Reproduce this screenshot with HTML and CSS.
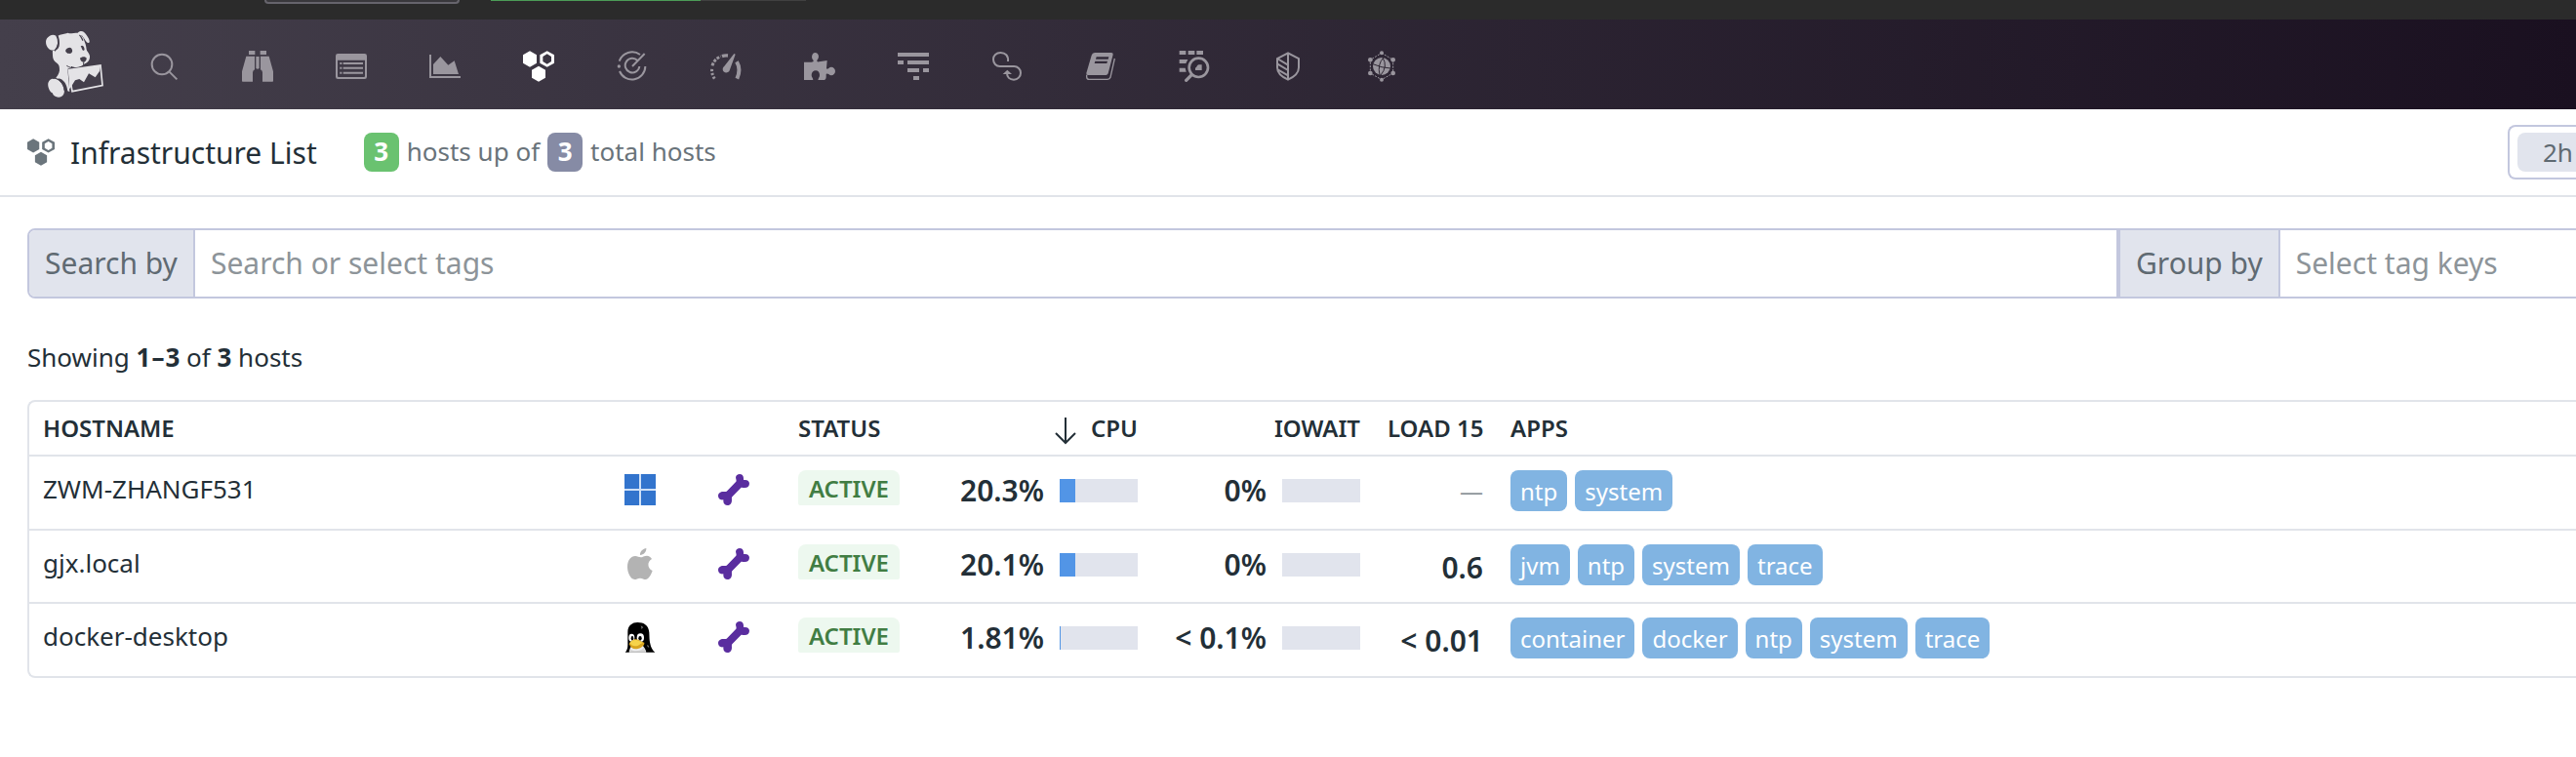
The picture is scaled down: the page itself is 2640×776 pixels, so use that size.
FILE: index.html
```html
<!DOCTYPE html>
<html lang="en">
<head>
<meta charset="utf-8">
<title>Infrastructure List</title>
<link rel="stylesheet" href="styles.css">
</head>
<body>
<svg class="defs" width="0" height="0" aria-hidden="true">
  <symbol id="bone" viewBox="0 0 96 96">
    <path d="M54 11C54 4 60 0 66 0c7 0 12 5 12 12v5c1 1 2 1 3 1 9-1 15 4 15 11 0 8-6 13-14 13-5 0-8-1-11-1L43 70c-2 3-1 6-1 10 0 10-6 16-13 16-8 0-13-6-13-13v-4C6 81 0 75 0 67c0-8 7-13 15-13 4 0 7 1 11-1l29-30c2-3 0-7-1-12z" fill="#5a2d9f"/>
  </symbol>
  <symbol id="hexes" viewBox="168 157 96 96">
    <path d="M189 158l21 12v25l-21 12-21-12v-25zM216 204l21 12v24l-21 12-21-12v-24z"/>
    <path fill-rule="evenodd" d="M242 158l22 12v25l-22 12-22-12v-25zM242 167l-13 8v15l13 8 13-8v-15z"/>
  </symbol>
</svg>

<div class="browser-bar">
  <span class="browser-tab"></span>
  <span class="progress"><span class="progress-done"></span></span>
</div>

<nav class="nav" aria-label="Main">
  <a class="logo" href="#" aria-label="Home">
    <svg viewBox="0 0 216 234" width="72" height="78" aria-hidden="true">
      <path fill="#e4e3e6" d="M58 29c8-4 17-5 26-7l5-2 4 2c10-1 18-2 26-2 3-4 8-6 13-5 8 2 13 10 18 18 4 6 6 12 5 16-2 3-6 2-9-1-4-4-7-10-10-14-3-5-5-7-7-7 4 5 8 8 9 14 4 10 7 18 8 30 1 6 9 11 10 20 1 12-5 20-15 24-6 4-14 12-24 12l-21 1-8 4 6 69-6-2c-2-12-4-25-19-36-5-3-12-3-20 1 5-9 13-17 14-28 0-11-1-18-7-22-10-6-14-15-14-24 0-8-1-12 0-15 10 0 18-5 20-14 2-12 0-23-3-32z"/>
      <path fill="#e4e3e6" d="M21 47c0-8 5-14 12-18 9-5 20-3 23 5 4 11 2 26-5 36-4 6-15 4-21-1-6-6-9-13-9-22z"/>
      <path fill="none" stroke="#443f4b" stroke-width="4" d="M54 29c8 13 8 33-6 47M124 27c5 2 7 10 11 17"/>
      <path fill="#e4e3e6" d="M28 174c3-10 12-14 22-13 13 3 25 18 27 33 3 12-4 24-17 24-9 0-16-4-19-13-9-4-15-20-13-31z"/>
      <path fill="none" stroke="#443f4b" stroke-width="3" d="M42 160c16-4 36 17 36 37"/>
      <path fill="#443f4b" d="M82 73c3-7 14-11 18-5 5 7 2 15-6 16-8 0-14-5-12-11zM128 61c5-4 10 0 11 6 2 6 0 9-4 7-3-1-3-7-7-13zM126 98c6-6 18-6 20 0 1 6-6 13-10 12-5-1-9-6-10-12z"/>
      <path fill="none" stroke="#443f4b" stroke-width="3" d="M137 110v8c-8 12-25 12-38 6M85 121c10 7 17 7 29 7"/>
      <path fill="#443f4b" d="M89 130l104-15 8 70-102 19z"/>
      <path fill="none" stroke="#e4e3e6" stroke-width="5" d="M91 134l98-14 6 62-93 18z"/>
      <path fill="#e4e3e6" d="M91 134l98-14-3 18-13 19-20-12-15 27-14-10-13 4-13 21-5 6z"/>
    </svg>
  </a>
  <a class="nav-link" href="#" aria-label="Search"><svg viewBox="456 156 96 96"><g fill="none" stroke="currentColor" stroke-width="6"><circle cx="498" cy="198" r="31"/><path d="M520 220l24 24"/></g></svg></a>
  <a class="nav-link" href="#" aria-label="Watchdog"><svg viewBox="744 156 96 96" fill="currentColor"><path d="M765 156h19v12h-19zM800 156h19v12h-19zM787 174h10v36q-5 4-10 0zM757 173h26v41q-6 3-6 9v28h-31q-2 0-2-3v-28zM827 173h-26v41q6 3 6 9v28h31q2 0 2-3v-28z"/></svg></a>
  <a class="nav-link" href="#" aria-label="Events"><svg viewBox="1032 156 96 96"><path fill="currentColor" fill-rule="evenodd" d="M1039 165h82q7 0 7 7v64q0 7-7 7h-82q-7 0-7-7v-64q0-7 7-7zM1038 185v49q0 3 3 3h78q3 0 3-3v-49z"/><path fill="none" stroke="currentColor" stroke-width="6" d="M1045 195h6m4 0h61M1045 209h6m4 0h61M1045 224h6m4 0h61"/></svg></a>
  <a class="nav-link" href="#" aria-label="Dashboards"><svg viewBox="1320 156 96 96" fill="currentColor"><path d="M1320 168h6v66h90v6h-96zM1332 228v-30l22-24 24 26 19-13 13 41z"/></svg></a>
  <a class="nav-link active" href="#" aria-label="Infrastructure"><svg fill="currentColor"><use href="#hexes"/></svg></a>
  <a class="nav-link" href="#" aria-label="Monitors"><svg viewBox="456 156 96 96"><g fill="none" stroke="currentColor" stroke-width="6"><path d="M464 188a42 42 0 0 1 64-20M544 204a41 41 0 0 1-79 15M520 186a22 22 0 1 0 6 18M504 204l38-39"/></g><circle cx="463" cy="204" r="5" fill="currentColor"/></svg></a>
  <a class="nav-link" href="#" aria-label="Metrics"><svg viewBox="744 156 96 96"><path fill="none" stroke="currentColor" stroke-width="9" stroke-dasharray="7 5" d="M757 242q-10-15-8-32"/><path fill="none" stroke="currentColor" stroke-width="9" stroke-dasharray="9 4" d="M750 202q6-20 26-29"/><path fill="none" stroke="currentColor" stroke-width="10" d="M780 173q8-3 18-2"/><path fill="none" stroke="currentColor" stroke-width="12" d="M825 190q14 23 1 52"/><path fill="currentColor" d="M821 167l-18 50c-3 9-21 9-21-4 0-5 4-8 7-12l28-36z"/></svg></a>
  <a class="nav-link" href="#" aria-label="Integrations"><svg viewBox="1032 156 96 96" fill="currentColor"><path d="M1032 191h22q8 0 7-5c-9-9-4-24 5-24 11 0 15 15 6 23q-2 6 6 5l25-4-2 24q1 5 7 0c7-8 20-2 20 9s-13 17-20 9q-8-3-8 1v7q0 10-9 10h-16c1-6 5-8 5-15 0-8-5-14-12-14s-13 6-13 14c0 7 5 9 5 15h-28z"/></svg></a>
  <a class="nav-link" href="#" aria-label="APM"><svg viewBox="1320 156 96 96" fill="currentColor"><path d="M1320 162h96v12h-96zM1320 186h18v12h-18zM1350 186h66v12h-66zM1350 210h36v12h-36zM1398 210h18v12h-18zM1368 234h18v12h-18z"/></svg></a>
  <a class="nav-link" href="#" aria-label="CI"><svg viewBox="228 156 96 96"><path fill="none" stroke="currentColor" stroke-width="6" d="M279 189c2-18-8-27-23-27-13 0-22 9-22 20 0 13 9 22 20 22h44c11 0 20 9 20 20 0 12-9 21-21 21-13 0-21-8-21-20"/><path fill="currentColor" d="M263 228l14-13 14 13z"/></svg></a>
  <a class="nav-link" href="#" aria-label="Notebooks"><svg viewBox="516 156 96 96"><path fill="currentColor" fill-rule="evenodd" d="M546 162h51q6 0 5 6l-15 58q-2 5-7 5h-55q-6 0-5-6l16-55q2-8 10-8zM551 175l-2 7h38l2-7zM547 188l-2 7h38l2-7z"/><path fill="none" stroke="currentColor" stroke-width="4" d="M521 230v6q0 8 8 8h56q7 0 9-6l13-58"/></svg></a>
  <a class="nav-link" href="#" aria-label="Logs"><svg viewBox="804 156 96 96"><path fill="currentColor" d="M806 156h20v12h-20zM833 156h20v12h-20zM859 156h20v12h-20zM806 183h26l-6 12h-20zM806 209h18l3 12h-21z"/><circle cx="865" cy="208" r="29" fill="none" stroke="currentColor" stroke-width="8"/><path d="M844 230l-17 17" fill="none" stroke="currentColor" stroke-width="10" stroke-linecap="round"/><path fill="currentColor" d="M855 216v-7c5-1 5-10 11-10h9v17z"/></svg></a>
  <a class="nav-link" href="#" aria-label="Security"><svg viewBox="1092 156 96 96"><path fill="none" stroke="currentColor" stroke-width="6" d="M1140 163l-33 17v28c0 17 17 30 33 37 16-7 33-20 33-37v-28zM1140 163v82M1107 180l33 20M1107 196l33 20M1110 215l30 17"/></svg></a>
  <a class="nav-link" href="#" aria-label="Synthetics"><svg viewBox="1380 156 96 96"><g fill="currentColor"><circle cx="1428" cy="204" r="27"/><circle cx="1428" cy="163" r="6"/><circle cx="1428" cy="245" r="6"/><circle cx="1393" cy="184" r="7"/><circle cx="1463" cy="184" r="7"/><circle cx="1393" cy="225" r="7"/><circle cx="1463" cy="225" r="7"/></g><path fill="none" stroke="currentColor" stroke-width="3" stroke-dasharray="6 4" d="M1428 163l35 21v41l-35 20-35-20v-41z"/><path class="globe-lines" d="M1401 197q27 12 54 13M1434 177q-20 20-12 54M1431 177q17 27-6 54"/></svg></a>
</nav>

<header class="header">
  <svg class="title-icon" width="28" height="28" aria-hidden="true"><use href="#hexes"/></svg>
  <h1 class="title">Infrastructure List</h1>
  <p class="summary"><span class="count up">3</span> hosts up of <span class="count total">3</span> total hosts</p>
  <div class="time-picker"><button class="time-button" type="button">2h</button></div>
</header>

<main class="main">
  <form class="filters">
    <div class="field search">
      <label class="field-label" for="search">Search by</label>
      <input class="field-input" id="search" type="text" placeholder="Search or select tags">
    </div>
    <div class="field group">
      <label class="field-label" for="group">Group by</label>
      <input class="field-input" id="group" type="text" placeholder="Select tag keys">
    </div>
  </form>

  <p class="showing">Showing <b>1<span class="dash">–</span>3</b> of <b>3</b> hosts</p>

  <div class="panel">
    <table class="hosts">
      <colgroup><col class="c-name"><col class="c-os"><col class="c-agent"><col class="c-status"><col class="c-cpu"><col class="c-io"><col class="c-load"><col></colgroup>
      <thead>
        <tr>
          <th scope="col">HOSTNAME</th><th></th><th></th><th scope="col">STATUS</th>
          <th scope="col" class="num"><svg class="sort" width="24" height="28" viewBox="0 0 24 28" aria-hidden="true"><path d="M12 0v26M2 16l10 10 10-10"/></svg>CPU</th>
          <th scope="col" class="num">IOWAIT</th><th scope="col" class="num">LOAD 15</th><th scope="col">APPS</th>
        </tr>
      </thead>
      <tbody>
        <tr>
          <td>ZWM-ZHANGF531</td>
          <td><svg class="icon" viewBox="0 0 32 32" role="img" aria-label="Windows"><path fill="#cfe0f7" d="M0 0h32v32H0z"/><path fill="#3274cd" d="M0 0h15v15H0zM17 0h15v15H17zM0 17h15v15H0zM17 17h15v15H17z"/></svg></td>
          <td><svg class="icon" role="img" aria-label="Agent"><use href="#bone"/></svg></td>
          <td><span class="status">ACTIVE</span></td>
          <td><div class="metric">20.3%<span class="bar"><span class="fill" style="width:20.3%"></span></span></div></td>
          <td><div class="metric">0%<span class="bar"></span></div></td>
          <td class="load none">—</td>
          <td><div class="tags"><span class="tag">ntp</span><span class="tag">system</span></div></td>
        </tr>
        <tr>
          <td>gjx.local</td>
          <td><svg class="icon" viewBox="0 0 96 96" role="img" aria-label="macOS"><path fill="#b3b3b3" d="M67 0c1 10-8 21-19 21C47 10 57 1 67 0zM84 33c-15 8-14 29 2 36-4 12-11 26-21 27-6 0-9-4-17-4s-11 4-17 4C18 96 9 74 9 58c0-22 11-34 24-34 7 0 12 4 17 4s11-5 19-5c6 0 12 4 15 10z"/></svg></td>
          <td><svg class="icon" role="img" aria-label="Agent"><use href="#bone"/></svg></td>
          <td><span class="status">ACTIVE</span></td>
          <td><div class="metric">20.1%<span class="bar"><span class="fill" style="width:20.1%"></span></span></div></td>
          <td><div class="metric">0%<span class="bar"></span></div></td>
          <td class="load">0.6</td>
          <td><div class="tags"><span class="tag">jvm</span><span class="tag">ntp</span><span class="tag">system</span><span class="tag">trace</span></div></td>
        </tr>
        <tr>
          <td>docker-desktop</td>
          <td><svg class="icon" viewBox="0 0 96 96" role="img" aria-label="Linux"><path d="M2 95c6-6 8-14 8-24V32C10 13 24 3 40 3c20 0 34 9 36 31 1 15 0 24 3 34 2 11 7 20 15 27z"/><path fill="#eee" d="M14 95c2-12 5-17 11-22l28-2c6 6 12 13 14 24z"/><path fill="#bbb" d="M18 86c8 6 30 8 42-6l5 15H16z" opacity=".5"/><g fill="#fff"><ellipse cx="22" cy="50" rx="9" ry="12"/><ellipse cx="49" cy="50" rx="11" ry="13"/></g><ellipse cx="24" cy="52" rx="4" ry="7"/><ellipse cx="48" cy="52" rx="5" ry="7"/><path fill="#d9a520" d="M14 70c4-8 14-16 22-15 10 1 15 9 25 10 2 10-14 20-27 20-9 0-16-6-20-15z"/><path fill="#f6d34a" d="M16 66c5-6 12-10 20-9 9 1 14 7 22 9-10 2-14 10-25 10-8 0-13-4-17-10z"/><path fill="#777" d="M50 13l8 5-6 6v-5zM69 72l5 2 2 7-5-3z"/></svg></td>
          <td><svg class="icon" role="img" aria-label="Agent"><use href="#bone"/></svg></td>
          <td><span class="status">ACTIVE</span></td>
          <td><div class="metric">1.81%<span class="bar"><span class="fill" style="width:1.81%"></span></span></div></td>
          <td><div class="metric">&lt; 0.1%<span class="bar"></span></div></td>
          <td class="load">&lt; 0.01</td>
          <td><div class="tags"><span class="tag">container</span><span class="tag">docker</span><span class="tag">ntp</span><span class="tag">system</span><span class="tag">trace</span></div></td>
        </tr>
      </tbody>
    </table>
  </div>
</main>
</body>
</html>
```
FILE: styles.css
```css
* { box-sizing: border-box; }

body {
  margin: 0;
  background: #fff;
  color: #232f37;
  font-family: "Noto Sans", sans-serif;
  font-size: 26px;
  line-height: 38px;
  overflow-x: hidden;
}

h1, p { margin: 0; }
button, input { font: inherit; }
svg { display: block; }
.defs { position: absolute; }

/* Strip of browser chrome */
.browser-bar {
  display: flex;
  align-items: flex-start;
  gap: 32px;
  height: 20px;
  padding-left: 271px;
  background: #2b2b2b;
}
.browser-tab {
  width: 200px;
  height: 4px;
  border: 2px solid #66646c;
  border-top: 0;
  border-radius: 0 0 8px 8px;
  background: #39383c;
}
.progress { width: 323px; height: 1px; background: #404040; }
.progress-done { display: block; width: 215px; height: 1px; background: #4c9c57; }

/* Navigation */
.nav {
  display: flex;
  align-items: center;
  height: 92px;
  padding-left: 40px;
  background: linear-gradient(90deg, #443f4b, #1a1020);
}
.logo { margin-right: 8px; }
.nav-link {
  display: flex;
  justify-content: center;
  width: 96px;
  padding: 32px 0 28px;
  color: #9a969e;
}
.nav-link svg { width: 32px; height: 32px; }
.nav-link.active { color: #fff; }
.globe-lines { fill: none; stroke: #2f2834; stroke-width: 3; }

/* Page header */
.header {
  display: flex;
  align-items: center;
  height: 90px;
  padding-left: 28px;
  border-bottom: 2px solid #e1e4ea;
}
.title-icon { fill: #6b757c; }
.title { margin-left: 16px; padding-top: 2px; font-size: 30px; font-weight: 400; line-height: 40px; }
.summary { display: flex; align-items: flex-start; gap: 8px; margin-left: 48px; color: #69737a; }
.count {
  width: 36px;
  padding-bottom: 2px;
  border-radius: 8px;
  color: #fff;
  font-weight: 700;
  text-align: center;
}
.up { background: #6ac270; }
.total { background: #868ba5; }
.time-picker {
  margin-left: auto;
  padding: 6px 0 6px 8px;
  border: 2px solid #c3c7de;
  border-right: 0;
  border-radius: 8px 0 0 8px;
}
.time-button {
  display: block;
  width: 60px;
  height: 40px;
  padding: 0 0 0 26px;
  border: 0;
  border-radius: 8px 0 0 8px;
  background: #e1e4ed;
  color: #5f6a72;
  text-align: left;
}

/* Filters */
.main { padding: 32px 0 32px 28px; }
.filters { display: flex; font-size: 30px; line-height: 40px; }
.field { display: flex; height: 72px; border: 2px solid #c3c7de; border-right-width: 4px; }
.search { flex: 1; border-radius: 8px 0 0 8px; }
.group { width: 467px; border-left: 0; border-right: 0; }
.field-label {
  padding: 14px 16px;
  border-right: 2px solid #c3c7de;
  background: #e1e4ed;
  color: #5f6a72;
  white-space: nowrap;
}
.search .field-label { border-radius: 6px 0 0 6px; }
.field-input {
  flex: 1;
  min-width: 0;
  padding: 0 16px;
  border: 0;
  outline: 0;
  background: none;
}
.field-input::placeholder { color: #8d9499; opacity: 1; }

.showing { margin: 41px 0 25px; }
.showing b { font-weight: 700; }
.dash { margin: 0 1px; }

/* Host table */
.panel { border: 2px solid #e1e4ea; border-right: 0; border-radius: 8px 0 0 8px; }
.hosts { width: 100%; table-layout: fixed; border-collapse: separate; border-spacing: 0; }
.c-name { width: 596px; }
.c-os { width: 96px; }
.c-agent { width: 82px; }
.c-status { width: 140px; }
.c-cpu { width: 236px; }
.c-io { width: 228px; }
.c-load { width: 126px; }
th {
  height: 54px;
  padding: 0 14px;
  font-size: 24px;
  font-weight: 600;
  text-align: left;
  white-space: nowrap;
}
.num { text-align: right; }
.sort {
  display: inline-block;
  margin-right: 14px;
  vertical-align: middle;
  fill: none;
  stroke: currentColor;
  stroke-width: 2;
}
td {
  height: 76px;
  padding: 14px 14px 0;
  border-top: 2px solid #e1e4ea;
  vertical-align: top;
}
tr:nth-child(2) td { height: 75px; }
.icon { width: 32px; height: 32px; margin-top: 4px; }
.status {
  display: block;
  width: 104px;
  height: 36px;
  border-radius: 8px 8px 2px 2px;
  background: #edf8ef;
  color: #417d43;
  font-size: 24px;
  font-weight: 600;
  text-align: center;
}
.metric {
  display: flex;
  align-items: center;
  justify-content: flex-end;
  gap: 16px;
  font-size: 30px;
  font-weight: 600;
  line-height: 42px;
  white-space: nowrap;
}
.bar { width: 80px; height: 24px; background: #e1e4ed; }
.fill { display: block; height: 24px; background: #5295e6; }
.load { font-size: 30px; font-weight: 600; line-height: 48px; text-align: right; white-space: nowrap; }
.none { color: #8d9499; font-size: 24px; font-weight: 400; line-height: 42px; }
.tags { display: flex; gap: 8px; }
.tag {
  padding: 2px 10px 0;
  border-radius: 8px;
  background: #81b4e2;
  color: #fff;
  font-size: 24px;
  font-weight: 400;
  line-height: 40px;
}
```
